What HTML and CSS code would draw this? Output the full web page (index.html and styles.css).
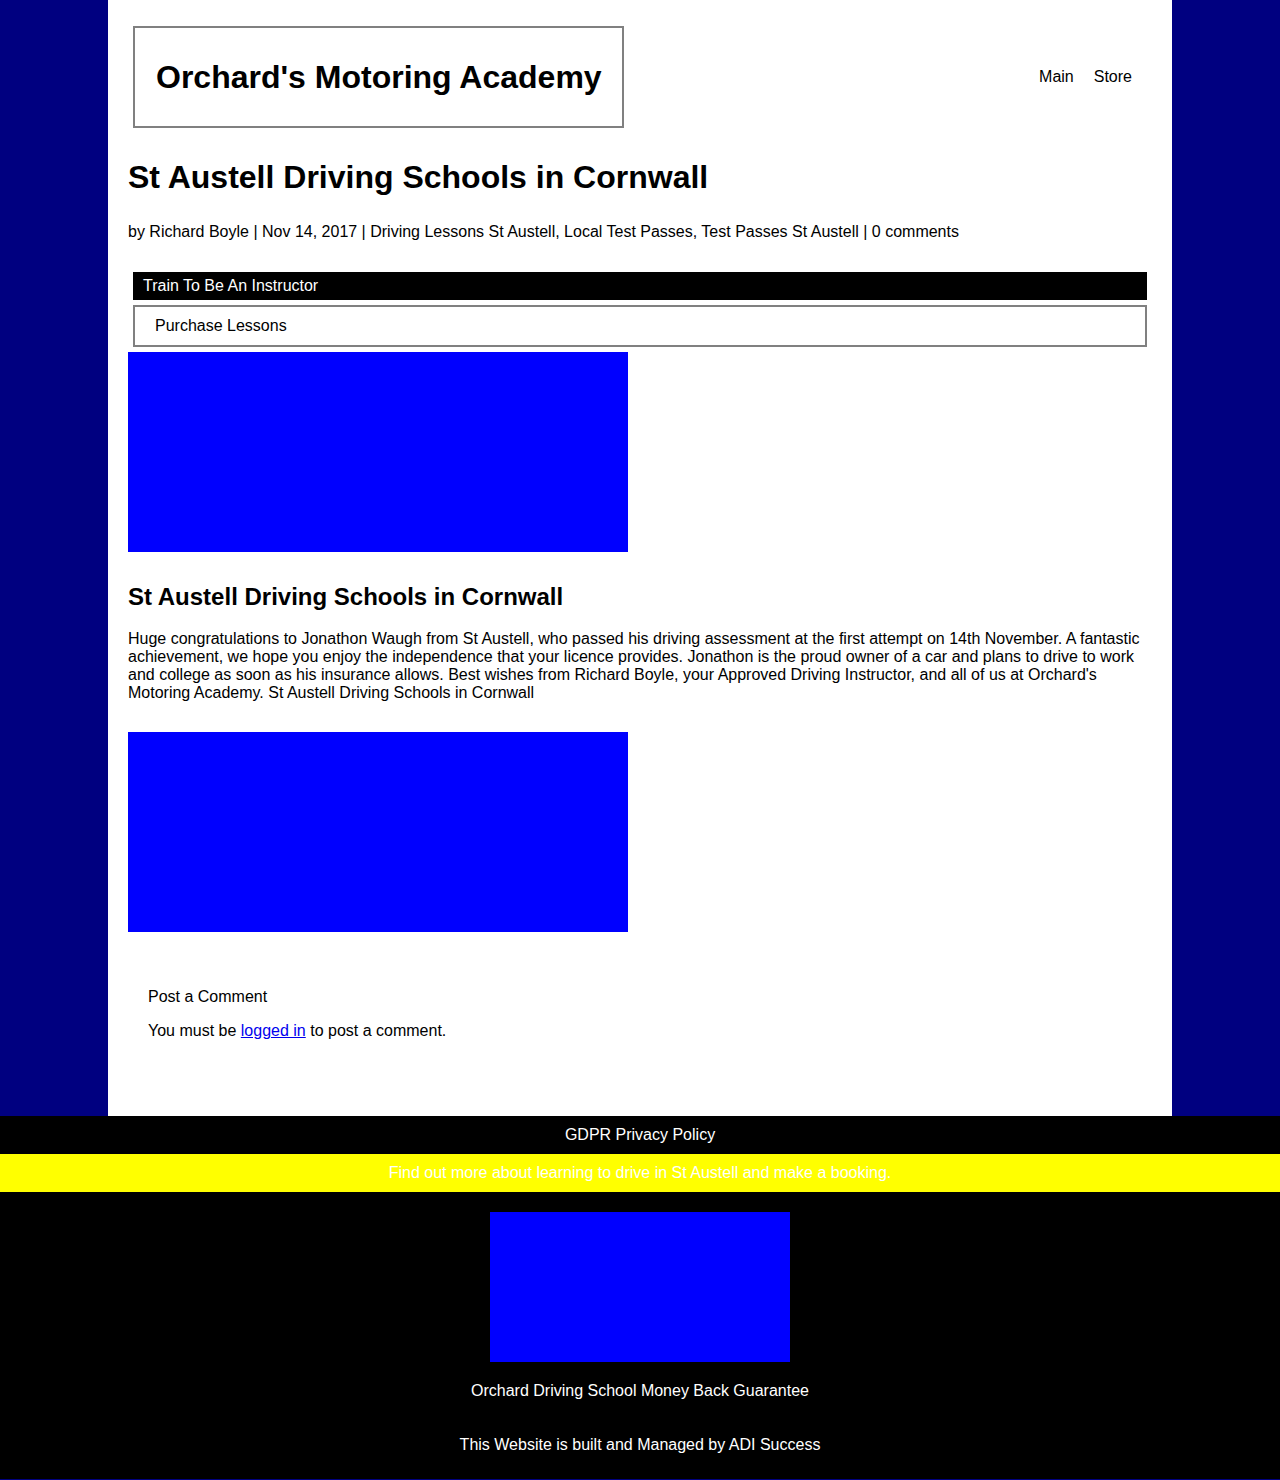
FILE: index.html
```html
<!DOCTYPE html>
<html lang="en">
<head>
<meta charset="utf-8">
<title>St Austell Driving Schools in Cornwall</title>
<link rel="stylesheet" href="styles.css">
</head>
<body>
<div class="page">
  <header class="site-header">
    <div class="logo">Orchard's Motoring Academy</div>
    <nav class="top-nav">
      <a href="#">Main</a>
      <a href="#">Store</a>
    </nav>
  </header>
  <main class="content">
    <h1 class="post-title">St Austell Driving Schools in Cornwall</h1>
    <p class="meta">by Richard Boyle | Nov 14, 2017 | Driving Lessons St Austell, Local Test Passes, Test Passes St Austell | 0 comments</p>
    <ul class="side-menu">
      <li class="item item-dark">Train To Be An Instructor</li>
      <li class="item item-outline">Purchase Lessons</li>
    </ul>
    <div class="image-box"></div>
    <h2 class="sub-title">St Austell Driving Schools in Cornwall</h2>
    <p class="body-text">Huge congratulations to Jonathon Waugh from St Austell, who passed his driving assessment at the first attempt on 14th November. A fantastic achievement, we hope you enjoy the independence that your licence provides. Jonathon is the proud owner of a car and plans to drive to work and college as soon as his insurance allows. Best wishes from Richard Boyle, your Approved Driving Instructor, and all of us at Orchard's Motoring Academy. St Austell Driving Schools in Cornwall</p>
    <div class="image-box image-second"></div>
    <section class="comments">
      <div class="comments-title">Post a Comment</div>
      <p class="comments-note">You must be <a href="#">logged in</a> to post a comment.</p>
    </section>
  </main>
</div>
<footer class="site-footer">
  <div class="bar bar-dark">GDPR Privacy Policy</div>
  <div class="bar bar-yellow">Find out more about learning to drive in St Austell and make a booking.</div>
  <div class="footer-main">
    <div class="footer-image"></div>
    <p class="footer-line">Orchard Driving School Money Back Guarantee</p>
    <p class="footer-line footer-last">This Website is built and Managed by ADI Success</p>
  </div>
</footer>
</body>
</html>
```

FILE: styles.css
```css
html, body {
  margin: 0;
  padding: 0;
}
body {
  background: #000080;
  font-family: "Liberation Sans", Arial, sans-serif;
  font-size: 16px;
  color: #000;
}
.page {
  width: 1024px;
  margin: 0 auto;
  padding: 0 20px 76px;
  background: #fff;
}
.site-header {
  display: flex;
  justify-content: space-between;
  align-items: center;
  padding-top: 26px;
}
.logo {
  margin-left: 5px;
  border: 2px solid #808080;
  padding: 32px 20px 32px 21px;
  font-size: 32px;
  font-weight: bold;
  line-height: 34px;
}
.top-nav {
  display: flex;
  gap: 20px;
  padding-right: 20px;
}
.top-nav a {
  color: #000;
  text-decoration: none;
}
.post-title {
  margin: 31px 0 0;
  font-size: 32px;
  line-height: 37px;
}
.meta {
  margin: 27px 0 0;
  line-height: 18px;
}
.side-menu {
  list-style: none;
  margin: 31px 5px 0;
  padding: 0;
  display: flex;
  flex-direction: column;
  gap: 5px;
}
.item {
  line-height: 18px;
}
.item-dark {
  background: #000;
  color: #fff;
  padding: 5px 10px;
}
.item-outline {
  border: 2px solid #808080;
  padding: 10px 20px;
}
.image-box {
  width: 500px;
  height: 200px;
  background: #0000ff;
  margin-top: 5px;
}
.sub-title {
  margin: 31px 0 0;
  font-size: 24px;
  line-height: 28px;
}
.body-text {
  margin: 19px 0 0;
  line-height: 18px;
}
.image-second {
  margin-top: 30px;
}
.comments {
  padding: 56px 20px 0;
}
.comments-title {
  line-height: 18px;
}
.comments-note {
  margin: 16px 0 0;
  line-height: 18px;
}
.comments-note a {
  color: #0000ee;
}
.site-footer {
  background: #000;
  color: #fff;
  text-align: center;
}
.bar {
  line-height: 18px;
  padding: 10px 0;
}
.bar-dark {
  background: #000;
}
.bar-yellow {
  background: #ffff00;
  color: #fff;
}
.footer-main {
  padding: 20px 0 25px;
}
.footer-image {
  width: 300px;
  height: 150px;
  background: #0000ff;
  margin: 0 auto;
}
.footer-line {
  margin: 20px 0 0;
  line-height: 18px;
}
.footer-last {
  margin-top: 36px;
}
```
